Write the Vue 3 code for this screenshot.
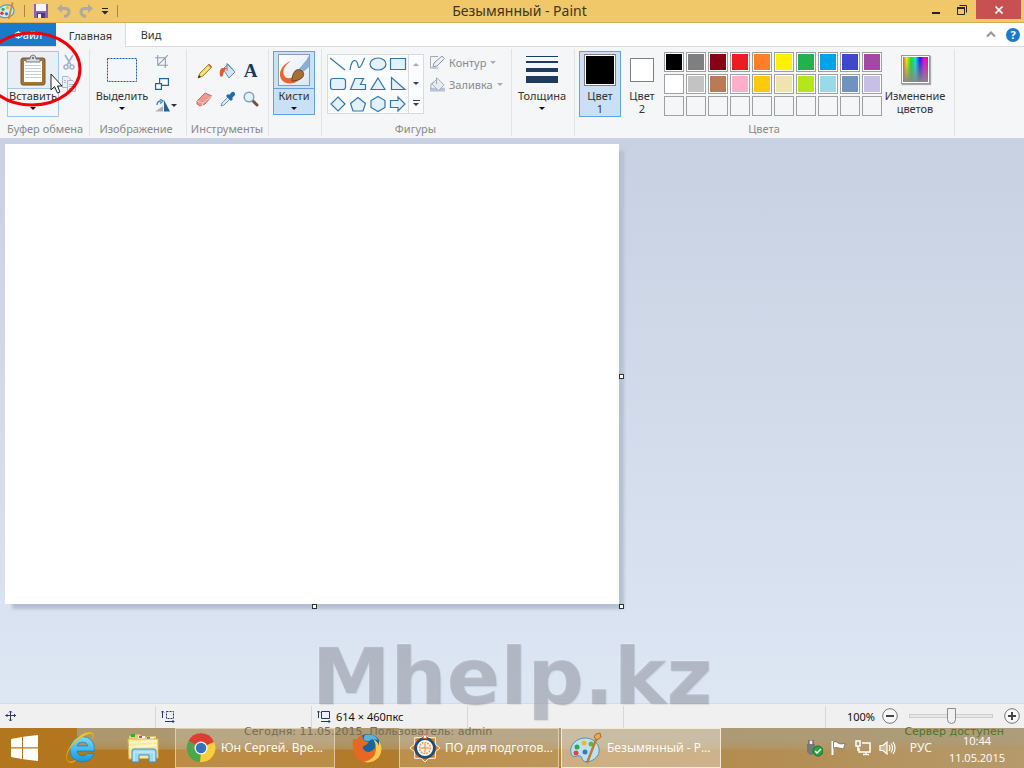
<script setup>
import { ref } from 'vue'

const zoom = ref(50)
const row1 = ['#000000', '#7f7f7f', '#880015', '#ed1c24', '#ff7f27', '#fff200', '#22b14c', '#00a2e8', '#3f48cc', '#a349a4']
const row2 = ['#ffffff', '#c3c3c3', '#b97a57', '#ffaec9', '#ffc90e', '#efe4b0', '#b5e61d', '#99d9ea', '#7092be', '#c8bfe7']
const palette = [...row1, ...row2, ...Array(10).fill('')]
const shapes = [
  { name: 'Линия', d: 'M2 4L17 16' },
  { name: 'Кривая', d: 'M2 16C3 9 5 5 8 7S9 15 12 13S15 5 17 4' },
  { name: 'Овал', d: 'M2 10a8 6 0 1 0 16 0a8 6 0 1 0-16 0z' },
  { name: 'Прямоугольник', d: 'M2.500 4.500H17.500V15.500H2.500z' },
  { name: 'Скругленный прямоугольник', d: 'M5 4.500H15Q17.500 4.500 17.500 7V13Q17.500 15.500 15 15.500H5Q2.500 15.500 2.500 13V7Q2.500 4.500 5 4.500z' },
  { name: 'Многоугольник', d: 'M7 4.500H15.500L12.500 10.500H17.500V15.500H2.500z' },
  { name: 'Треугольник', d: 'M10 4L17 15.500H3z' },
  { name: 'Прямоугольный треугольник', d: 'M3.500 3.500V15.500H17z' },
  { name: 'Ромб', d: 'M10 3L17 10L10 17L3 10z' },
  { name: 'Пятиугольник', d: 'M10 3.500L17.500 9.500L15 17H5L2.500 9.500z' },
  { name: 'Шестиугольник', d: 'M10 2.500L17 6.500V13.500L10 17.500L3 13.500V6.500z' },
  { name: 'Стрелка', d: 'M2.500 6.500H10V3L17 10L10 17V13.500H2.500z' },
]
</script>

<template>
  <div class="window">
    <header class="titlebar">
      <div class="quick">
        <svg class="app-icon" width="18" height="18" viewBox="0 0 32 32"><path d="M15 5C7 5-1 12 1 21c2 8 14 9 22 4 5-3 7-10 4-15C25 6 20 5 15 5z" fill="#cfe9f8" stroke="#5794bd" stroke-width="2" /><circle cx="9" cy="13" r="3" fill="#3fa94b" /><circle cx="17" cy="10" r="3" fill="#f2b51c" /><circle cx="7" cy="20" r="3" fill="#dd3a2c" /><circle cx="15" cy="21" r="3" fill="#3b76c6" /><path d="M26 1L19 30" stroke="#d98532" stroke-width="3.500" /></svg>
        <i class="bar"></i>
        <button class="plain" aria-label="Сохранить"><svg width="16" height="16" viewBox="0 0 16 16"><path d="M1 1H15V15H1z" fill="#8663b5" /><path d="M3 1H13V8H3z" fill="#f8f4fb" /><path d="M4 10H12V15H4z" fill="#4d3a78" /><path d="M5 11H8V15H5z" fill="#f5f1fa" /></svg></button>
        <button class="plain" aria-label="Отменить"><svg width="14" height="14" viewBox="0 0 14 14"><path d="M3.500 4.500H8Q12 4.500 12 8T7 12.500" fill="none" stroke="#b0a99c" stroke-width="3" /><path d="M0 4.500L5 0V9z" fill="#b0a99c" /></svg></button>
        <button class="plain" aria-label="Вернуть"><svg width="14" height="14" viewBox="0 0 14 14"><path d="M10.500 4.500H6Q2 4.500 2 8T7 12.500" fill="none" stroke="#b0a99c" stroke-width="3" /><path d="M14 4.500L9 0V9z" fill="#b0a99c" /></svg></button>
        <button class="plain" aria-label="Настройка панели"><svg width="8" height="8" viewBox="0 0 8 8"><path d="M1 1.500H7" stroke="#2c2615" /><path d="M.5 4H7.500L4 7.500z" fill="#2c2615" /></svg></button>
        <i class="bar"></i>
      </div>
      <h1>Безымянный - Paint</h1>
      <div class="controls">
        <button class="plain" aria-label="Свернуть"><svg width="8" height="14" viewBox="0 0 8 14"><path d="M0 10H8" stroke="#222" stroke-width="2" /></svg></button>
        <button class="plain" aria-label="Восстановить"><svg width="10" height="10" viewBox="0 0 10 10" fill="none" stroke="#2c2615"><path d="M.5 3H7.500V9.500H.5z" /><path d="M0 3H8" stroke-width="2" /><path d="M2.500 .5H9.500V7.500" /></svg></button>
        <button class="plain close" aria-label="Закрыть"><svg width="8" height="8" viewBox="0 0 8 8"><path d="M.5 .5L7.500 7.500M7.500 .5L.5 7.500" stroke="#fff" stroke-width="1.600" /></svg></button>
      </div>
    </header>

    <nav class="tabs">
      <button class="file">Файл</button>
      <button class="tab active">Главная</button>
      <button class="tab">Вид</button>
      <div class="help">
        <button class="plain" aria-label="Свернуть ленту"><svg width="10" height="10" viewBox="0 0 10 10"><path d="M1 6.500L5 2.500L9 6.500" fill="none" stroke="#9a9a9a" stroke-width="2.200" /></svg></button>
        <button class="plain help-button" aria-label="Справка">?</button>
      </div>
    </nav>

    <section class="ribbon">
      <div class="group clipboard">
        <div class="body">
          <button class="split paste">
            <span class="top"><svg width="26" height="32" viewBox="0 0 26 32"><rect x="1" y="4" width="24" height="27" rx="2" fill="#a47238" stroke="#7d5427" /><path d="M4 7H22V28H4z" fill="#fff" /><path d="M5 11.500H21M5 14.500H21M5 17.500H21M5 20.500H21M5 23.500H21" stroke="#c5cdd6" /><path d="M6 8V5H10Q10 1 13 1T16 5H20V8z" fill="#d8dcdf" stroke="#737a80" /><circle cx="13" cy="4" r="1" fill="#555" /></svg></span>
            <span class="caption">Вставить</span><i class="arrow"></i>
          </button>
          <div class="stack">
            <button class="plain" aria-label="Вырезать"><svg width="12" height="16" viewBox="0 0 12 16" fill="none" stroke="#a3b3c8" stroke-width="1.600"><path d="M2 1L8 11M10 1L4 11" /><circle cx="3" cy="13" r="2" /><circle cx="9" cy="13" r="2" /></svg></button>
            <button class="plain" aria-label="Копировать"><svg width="14" height="16" viewBox="0 0 14 16" fill="#edf1f7" stroke="#a9b9cf"><path d="M.5 .5H6L8.500 3V11.500H.5z" /><path d="M5.500 4.500H11L13.500 7V15.500H5.500z" /><path d="M7 8.500H12M7 10.500H12M7 12.500H12M2 4.500H4M2 6.500H4" /></svg></button>
          </div>
        </div>
        <div class="label">Буфер обмена</div>
      </div>

      <div class="group image">
        <div class="body">
          <button class="split select">
            <span class="top"><svg width="32" height="26" viewBox="0 0 32 26"><rect x="1.500" y="1.500" width="29" height="23" fill="#f3f7fb" stroke="#1c5c9c" stroke-dasharray="2 1" /></svg></span>
            <span class="caption">Выделить</span><i class="arrow"></i>
          </button>
          <div class="stack">
            <button class="plain" aria-label="Обрезать"><svg width="13" height="13" viewBox="0 0 12 12" fill="none" stroke="#8f9db2"><path d="M2.500 0V9.500H12M0 2.500H9.500V12M2.500 9.500L12 0" /></svg></button>
            <button class="plain" aria-label="Изменить размер"><svg width="14" height="12" viewBox="0 0 14 12" fill="#fff" stroke="#1f66a5" stroke-width="1.200"><path d="M4.600 .6H13.400V7.400H4.600z" /><path d="M.6 5.600H6.400V11.400H.6z" /></svg></button>
            <button class="plain rotate" aria-label="Повернуть"><svg width="16" height="13" viewBox="0 0 16 13"><path d="M0 12.500L8 7V12.500z" fill="#a8b1b9" /><path d="M9 12.500V1L15 12.500z" fill="#28638d" /><path d="M2 6Q2 2 6 2M5 0L8 2L5 4.500" fill="none" stroke="#3e86c4" stroke-width="1.300" /></svg><i class="arrow"></i></button>
          </div>
        </div>
        <div class="label">Изображение</div>
      </div>

      <div class="group tools">
        <div class="body tool-grid">
          <button class="plain" aria-label="Карандаш"><svg width="16" height="16" viewBox="0 0 16 16"><path d="M1 15L3 10L12 1L15 4L6 13z" fill="#f4d45b" stroke="#8f7131" stroke-width=".8" /><path d="M11 2L14 5L15 4L12 1z" fill="#d96a5c" /><path d="M4 12L12 4" stroke="#fff3aa" /><path d="M1 15L2 12L4 14z" fill="#342b20" /></svg></button>
          <button class="plain" aria-label="Заливка цветом"><svg width="17" height="16" viewBox="0 0 17 16"><path d="M4 6L9 1L16 9L10 15z" fill="#d3e5f1" stroke="#6f8da5" /><path d="M8 0V8M9 2L15 8" stroke="#6b8ea9" fill="none" /><path d="M1 13Q0 6 3 5L9 5Q5 6 4 12Q3 15 1 13z" fill="#e6592c" /></svg></button>
          <button class="plain text-tool" aria-label="Текст">A</button>
          <button class="plain" aria-label="Ластик"><svg width="17" height="15" viewBox="0 0 17 15"><path d="M1 9L9 1L16 4L9 12L4 14L1 12z" fill="#ef9791" stroke="#b25b59" stroke-width=".8" /><path d="M1 9L7 11L16 4M7 11L6 14" fill="none" stroke="#ffcbc7" /></svg></button>
          <button class="plain" aria-label="Палитра"><svg width="16" height="16" viewBox="0 0 16 16"><path d="M1 15L2 12L8 6L10 8L4 14z" fill="#d7eef9" stroke="#55809e" stroke-width=".8" /><path d="M6 5L8 3L9 4L12 1Q15 0 15 4L12 7L13 8L11 10z" fill="#2369ab" /></svg></button>
          <button class="plain" aria-label="Масштаб"><svg width="16" height="16" viewBox="0 0 16 16"><path d="M9 9L14 14" stroke="#745037" stroke-width="3" stroke-linecap="round" /><circle cx="6" cy="6" r="4.800" fill="#dff3ff" stroke="#8aa0b1" stroke-width="1.500" /></svg></button>
        </div>
        <div class="label">Инструменты</div>
      </div>

      <div class="group brushes">
        <div class="body">
          <button class="split brush">
            <span class="top"><svg width="32" height="32" viewBox="0 0 32 32"><defs><linearGradient id="paper" x2="1" y2="1"><stop stop-color="#fff" /><stop offset="1" stop-color="#d9e7f1" /></linearGradient></defs><rect x=".5" y=".5" width="31" height="31" fill="url(#paper)" stroke="#8c9eae" /><path d="M13 7C-1 12-2 29 12 29.500C18 29.500 21 26 23 23L18 20C14 25 8 26 6 21C4 16 7 11 13 7z" fill="#ea642e" /><path d="M31 2L20 15L24 19L31 13z" fill="#8bafd0" /><path d="M29 4L19 16L22 18" fill="none" stroke="#eff8ff" stroke-width="1.500" /><path d="M14 27C14 18 19 13 24 17C29 22 22 27 14 27z" fill="#a66e35" stroke="#74451e" /></svg></span>
            <span class="caption">Кисти</span><i class="arrow"></i>
          </button>
        </div>
      </div>

      <div class="group shapes">
        <div class="body">
          <div class="gallery">
            <div class="shape-grid">
              <button v-for="s in shapes" :key="s.name" class="plain" :aria-label="s.name"><svg width="20" height="20" viewBox="0 0 20 20"><path :d="s.d" :fill="s.name === 'Линия' || s.name === 'Кривая' ? 'none' : '#e3f1fb'" stroke="#3476ac" stroke-width="1.200" /></svg></button>
            </div>
            <div class="scroller">
              <button class="plain" aria-label="Вверх"><i class="arrow up"></i></button>
              <button class="plain" aria-label="Вниз"><i class="arrow"></i></button>
              <button class="plain" aria-label="Все фигуры"><i class="line"></i><i class="arrow"></i></button>
            </div>
          </div>
          <div class="options">
            <button class="plain"><svg width="15" height="14" viewBox="0 0 15 14"><path d="M8 1.500H.5V13L8 13" fill="none" stroke="#9eabbb" /><path d="M3 12L4 8L12 1L14.500 3.500L7 11z" fill="#edf0f4" stroke="#8999ac" /></svg>Контур<i class="arrow"></i></button>
            <button class="plain"><svg width="15" height="15" viewBox="0 0 16 15"><path d="M0 11H16V15H0z" fill="#b6c2d9" /><path d="M2 7L8 1L15 8L9 14z" fill="#e8edf3" stroke="#9dabba" /><path d="M7 0V7M1 12V7L4 5" stroke="#94a4b8" fill="none" /></svg>Заливка<i class="arrow"></i></button>
          </div>
        </div>
        <div class="label">Фигуры</div>
      </div>

      <div class="group size">
        <div class="body">
          <button class="split">
            <span class="top"><svg width="32" height="28" viewBox="0 0 32 28"><path d="M0 0H32V1H0zM0 5H32V7H0zM0 12H32V16H0zM0 20H32V27H0z" fill="#1f3a5f" /></svg></span>
            <span class="caption">Толщина</span><i class="arrow"></i>
          </button>
        </div>
      </div>

      <div class="group colors">
        <div class="body">
          <button class="color-choice chosen"><span class="swatch black"></span><span>Цвет<br>1</span></button>
          <button class="color-choice"><span class="swatch white"></span><span>Цвет<br>2</span></button>
          <div class="palette">
            <button v-for="(c, i) in palette" :key="i" :class="{ empty: !c }" :style="{ backgroundColor: c || 'transparent' }" :aria-label="'Цвет палитры ' + (i + 1)"></button>
          </div>
          <button class="color-choice edit"><span class="swatch rainbow"></span><span>Изменение<br>цветов</span></button>
        </div>
        <div class="label">Цвета</div>
      </div>
    </section>

    <main class="workspace">
      <div class="canvas">
        <i class="handle right"></i><i class="handle bottom"></i><i class="handle corner"></i>
      </div>
      <div class="watermark">Mhelp.kz</div>
    </main>

    <footer class="status">
      <div class="cell"><svg width="12" height="12" viewBox="0 0 12 12" fill="none" stroke="#223d5c"><path d="M5.500 1V11M.5 5.500H11M4 2.500L5.500 1L7 2.500M4 9.500L5.500 11L7 9.500M2.500 4L1 5.500L2.500 7M9 4L10.500 5.500L9 7" /></svg></div>
      <div class="cell"><svg width="14" height="13" viewBox="0 0 14 13" fill="none" stroke="#223d5c"><path d="M1.500 1V8M0 2.500L1.500 1L3 2.500M4 11.500H13M11.500 10L13 11.500L11.500 13" /><path d="M5.500 1.500H12.500V8.500H5.500z" stroke-dasharray="2 1" /></svg></div>
      <div class="cell"><svg width="14" height="13" viewBox="0 0 14 13" fill="none" stroke="#223d5c"><path d="M1.500 1V8M0 2.500L1.500 1L3 2.500M4 11.500H13M11.500 10L13 11.500L11.500 13M4.500 1.500H12.500V8.500H4.500z" /></svg><span>614 × 460пкс</span></div>
      <div class="cell"></div>
      <div class="cell last"></div>
      <div class="zoom">
        <span>100%</span>
        <button class="plain" aria-label="Уменьшить"><svg width="16" height="16" viewBox="0 0 16 16"><circle cx="8" cy="8" r="7.300" fill="#f7f7f7" stroke="#777" /><path d="M4 8H12" stroke="#444" stroke-width="2" /></svg></button>
        <input v-model="zoom" type="range" min="0" max="100" aria-label="Масштаб">
        <button class="plain" aria-label="Увеличить"><svg width="16" height="16" viewBox="0 0 16 16"><circle cx="8" cy="8" r="7.300" fill="#f7f7f7" stroke="#777" /><path d="M4 8H12M8 4V12" stroke="#444" stroke-width="2" /></svg></button>
      </div>
    </footer>

    <div class="taskbar">
      <span class="ghost left">Сегодня: 11.05.2015&nbsp; Пользователь: admin</span>
      <span class="ghost server">Сервер доступен</span>
      <button class="plain start" aria-label="Пуск"><svg width="28" height="26" viewBox="0 0 28 26" fill="#fff"><path d="M0 4L11 2V12.300H0zM12 1.800L27 0V12.300H12zM0 13.500H11V24L0 22zM12 13.500H27V26L12 24.200z" /></svg></button>
      <button class="plain pin" aria-label="Internet Explorer"><svg width="32" height="32" viewBox="0 0 32 32"><defs><linearGradient id="ie" y2="1" x2="0"><stop stop-color="#7bdcff" /><stop offset="1" stop-color="#1599d8" /></linearGradient></defs><path d="M29.500 19H12Q13 24 17.500 24Q21 24 22 21.500H29Q26 30 17 30Q5 29 5 17.500Q6 5 17 4.500Q30 5 29.500 19zM12 14H23Q22 10 17.500 10Q13 10 12 14z" fill="url(#ie)" stroke="#137eb7" stroke-width=".7" fill-rule="evenodd" /><path d="M27 8C30 1 26 0 19 4C9 9-1 22 2 28Q4 32 11 28Q8 32 4 30C-4 26 8 6 20 1C30-2 30 4 27 8z" fill="#f8c828" stroke="#d9a015" stroke-width=".5" /></svg></button>
      <button class="plain pin" aria-label="Проводник"><svg width="32" height="30" viewBox="0 0 32 30"><path d="M2 3L12 1L16 4L29 3V8H2z" fill="#f2ce69" /><path d="M4 1H8V4H4z" fill="#2fac49" /><path d="M11 3H18V6H11z" fill="#fff" /><path d="M12 3H15V5H12z" fill="#db5140" /><path d="M20 4H27V7H20z" fill="#fff" /><path d="M20 4H23V6H20z" fill="#3189ce" /><path d="M1 6H31V25L2 26z" fill="#fae9a2" stroke="#d8b75b" /><path d="M2 10L30 8M2 14L30 12" stroke="#fff6cb" stroke-width="2" /><path d="M5 29V18Q5 16 7 16H27Q29 16 29 18V29H22V22H12V29z" fill="#9ed8f2" stroke="#438fbd" /><path d="M7 28V19H27V28" fill="none" stroke="#d4f1fd" /></svg></button>
      <button class="task"><svg width="30" height="30" viewBox="0 0 30 30"><path d="M15 15L2.500 8A14 14 0 0 1 28 9z" fill="#dc3e32" /><path d="M15 15L28 9A14 14 0 0 1 14 29z" fill="#f8cf3b" /><path d="M15 15L14 29A14 14 0 0 1 2.500 8z" fill="#49a84b" /><circle cx="15" cy="15" r="6.500" fill="#fff" /><circle cx="15" cy="15" r="5.200" fill="#3572bc" /></svg><span>Юн Сергей. Вре...</span></button>
      <button class="plain pin" aria-label="Firefox"><svg width="32" height="32" viewBox="0 0 32 32"><circle cx="17" cy="15" r="13" fill="#17659e" /><path d="M14 3Q23 1 27 8Q20 6 18 9Q10 9 14 3z" fill="#55b5dd" /><path d="M2 7L7 7Q8 3 12 2Q10 6 14 9L18 10L15 13Q10 14 13 18Q17 22 22 18Q26 15 24 8Q31 15 27 24Q20 33 10 29Q0 25 2 7z" fill="#e86724" /><path d="M28 8Q33 17 28 25Q22 32 13 30Q25 27 25 17Q25 11 22 7Q27 10 28 14z" fill="#ffc94b" /></svg></button>
      <button class="task station"><svg width="30" height="32" viewBox="0 0 32 32"><path d="M16 1L20 5H27V12L32 16L27 20V27H20L16 31L12 27H5V20L0 16L5 12V5H12z" fill="#e47a20" stroke="#fff" /><circle cx="16" cy="16" r="10" fill="#fff" stroke="#174d7d" stroke-width="3" /><circle cx="16" cy="16" r="6" fill="#fff3df" stroke="#e99b59" stroke-width="1.500" stroke-dasharray="2 1" /><path d="M11 16H21M16 11V21" stroke="#e6a66b" stroke-width="1.500" /><path d="M14 4L16 1L18 4V6H14z" fill="#fff" stroke="#d44c1b" /></svg><span>ПО для подготов...</span></button>
      <button class="task current"><svg width="32" height="32" viewBox="0 0 32 32"><path d="M15 6C7 6-1 13 1 21q1 5 6 3q5-1 5 3c2 5 12 3 16-4 4-8-3-17-13-17z" fill="#bee1f1" stroke="#558fb8" /><circle cx="7" cy="15" r="2.500" fill="#31a84d" /><circle cx="14" cy="11" r="2.500" fill="#efb72b" /><circle cx="21" cy="12" r="2.500" fill="#62b545" /><circle cx="6" cy="21" r="2.500" fill="#dc4936" /><circle cx="15" cy="20" r="2.500" fill="#3779bc" /><path d="M27 5L17 31" stroke="#c07c34" stroke-width="2.500" /><path d="M24 5Q25 1 30 1L31 5L27 8z" fill="#e6aa56" stroke="#ad6b2c" /></svg><span>Безымянный - P...</span></button>
      <div class="tray">
        <svg width="16" height="17" viewBox="0 0 16 17"><path d="M2 4V0H6V4" fill="#eee" stroke="#555" /><path d="M0 4H8V12L5 15H3L0 12z" fill="#777" /><circle cx="11" cy="11" r="5" fill="#23a641" stroke="#17752e" /><path d="M8 11L10 13L14 9" fill="none" stroke="#fff" stroke-width="1.500" /></svg>
        <svg width="16" height="16" viewBox="0 0 16 16"><path d="M1.500 1V15" stroke="#fff" stroke-width="2" /><path d="M2.500 2Q5 1 7 3L9 4L14 3.500L12.500 9L8 8Q5 7 2.500 8z" fill="#fff" stroke="#5a4e3d" stroke-width=".6" /></svg>
        <svg width="16" height="16" viewBox="0 0 16 16" fill="none" stroke="#fff" stroke-width="1.500"><path d="M7 3H15V12H4V8M8 14.500H14M11 12V14" /><path d="M1 1H5V6H1zM3 6V11" /></svg>
        <svg width="17" height="16" viewBox="0 0 17 16" fill="none" stroke="#fff" stroke-width="1.200"><path d="M1 5.500H4L8 2V14L4 10.500H1z" fill="#fff" fill-opacity=".35" /><path d="M10 5Q12 8 10 11M12 3.500Q15 8 12 12.500M14 2Q18 8 14 14" /></svg>
        <span class="lang">РУС</span>
        <time>10:44<br>11.05.2015</time>
      </div>
    </div>

    <svg class="mark" width="84" height="80" viewBox="0 0 84 80"><ellipse cx="32" cy="40" rx="48" ry="36" fill="none" stroke="#f00008" stroke-width="3" /></svg>
    <svg class="cursor" width="13" height="21" viewBox="0 0 13 21"><path d="M1 1V17L4.500 13.500L7.500 20L10 19L7.500 13H12z" fill="#fff" stroke="#222" /></svg>
  </div>
</template>

<style>
html, body, #app { height: 100%; }
body { margin: 0; overflow: hidden; }
</style>

<style scoped>
* { box-sizing: border-box; }
.window { position: relative; display: flex; flex-direction: column; height: 100vh; overflow: hidden; font: 11px/13px "Noto Sans", "Open Sans", sans-serif; color: #333; }
button { font: inherit; color: inherit; margin: 0; padding: 0; border: 0; background: none; }
svg { display: block; flex: none; }
.plain { display: flex; align-items: center; justify-content: center; }

.titlebar { display: grid; grid-template-columns: 1fr auto 1fr; height: 23px; background: #f0c869; border-bottom: 1px solid #d6ae55; }
.quick { display: flex; align-items: center; gap: 8px; }
.app-icon { margin-left: -2px; }
.bar { width: 1px; height: 12px; background: #a68748; }
h1 { margin: 0 0 0 15px; font: 14px/22px "Noto Sans", "Open Sans", sans-serif; color: #41351c; }
.controls { display: flex; justify-content: flex-end; align-items: flex-start; gap: 8px; padding-right: 3px; }
.controls button { width: 18px; height: 19px; }
.controls .close { width: 45px; margin-left: -3px; background: #c75050; }

.tabs { display: flex; height: 24px; background: #fff; border-bottom: 1px solid #dadbdc; }
.file { width: 56px; background: #1979ca; color: #fff; }
.tab { width: 50px; }
.tab.active { width: 70px; height: 24px; background: #f5f6f7; border-right: 1px solid #dadbdc; }
.help { display: flex; align-items: center; gap: 10px; margin-left: auto; padding-right: 4px; }
.help-button { width: 14px; height: 14px; border-radius: 50%; background: #1979ca; color: #fff; font-weight: bold; }

.ribbon { display: flex; height: 93px; background: #f5f6f7; border-bottom: 2px solid #cbd4e3; padding: 2px 0; }
.group { display: flex; flex-direction: column; flex: none; border-right: 1px solid #e2e3e4; padding: 2px 5px 0 6px; }
.body { display: flex; flex: 1; align-items: flex-start; }
.label { color: #8a8a8a; text-align: center; line-height: 13px; white-space: nowrap; margin-bottom: 1px; }
.clipboard { width: 90px; padding-left: 7px; padding-right: 6px; }
.image { width: 97px; padding-right: 10px; }
.image .label { align-self: center; }
.tools { width: 82px; padding-left: 4px; padding-right: 5px; }
.tools .label { align-self: center; }
.brushes { width: 53px; padding-left: 4px; }
.shapes { width: 190px; padding-left: 5px; padding-right: 7px; }
.size { width: 63px; padding-left: 4px; }
.colors { width: 380px; padding-left: 4px; }

.split { display: flex; flex-direction: column; align-items: center; width: 52px; height: 66px; border: 1px solid transparent; }
.top { display: flex; align-items: center; justify-content: center; width: 100%; height: 37px; border-bottom: 1px solid transparent; }
.caption { line-height: 13px; white-space: nowrap; }
.arrow { width: 0; height: 0; border: 3px solid transparent; border-top-color: currentColor; border-bottom: 0; }
.split .arrow { margin-top: 5px; color: #111; }
.paste { border-color: #a4c8ea; }
.paste .top { background: #e8eff7; border-color: #a4c8ea; }
.brush { width: 42px; height: 64px; background: #c9e0f7; border-color: #62a2e4; }
.brush .top { border-color: #62a2e4; }
.stack { display: flex; flex-direction: column; align-items: center; gap: 1px; margin-left: 3px; }
.stack button { height: 21px; }
.image .stack { margin-left: 7px; align-items: flex-start; }
.rotate { gap: 0; }
.tool-grid { display: grid; grid-template-columns: repeat(3, 23px); grid-auto-rows: 28px; padding: 6px 0 0 2px; align-content: start; align-items: center; }
.text-tool { font: bold 19px/20px "Liberation Serif", serif; color: #1f3a5f; }

.gallery { display: flex; margin-top: 3px; height: 60px; border: 1px solid #dadbdc; background: #fbfcfd; }
.shape-grid { display: grid; grid-template-columns: repeat(4, 20px); grid-auto-rows: 20px; align-content: center; }
.scroller { display: grid; grid-template-rows: repeat(3, 1fr); width: 15px; border-left: 1px solid #dadbdc; color: #37404a; }
.scroller button { flex-direction: column; gap: 2px; }
.up { border-top: 0; border-bottom: 3px solid #aaa; }
.line { width: 7px; height: 1px; background: #37404a; }
.options { display: flex; flex-direction: column; margin: 0 0 0 6px; color: #8a8a8a; }
.options button { height: 22px; gap: 4px; justify-content: flex-start; white-space: nowrap; }
.options .arrow { color: #aaa; }

.color-choice { display: flex; flex-direction: column; align-items: center; width: 42px; height: 66px; border: 1px solid transparent; padding-top: 2px; }
.color-choice span:last-child { margin-top: 3px; }
.chosen { background: #c9e0f7; border-color: #62a2e4; }
.swatch { width: 32px; height: 32px; border: 1px solid #808080; background: #000; box-shadow: inset 0 0 0 1px #fff; }
.white { width: 24px; height: 24px; margin: 4px; background: #fff; }
.rainbow { width: 29px; height: 29px; margin: 1px 0 2px; border-color: #999; box-shadow: inset 0 0 0 1px #fff, 1px 1px 1px #aaa; background: linear-gradient(to bottom, transparent, #888), linear-gradient(to right, #e33, #fe0, #0e1, #0ee, #11e, #e0e, #e11); }
.edit { width: 62px; margin-left: 2px; }
.palette { display: grid; grid-template-columns: repeat(10, 20px); grid-auto-rows: 20px; gap: 2px; margin: 1px 0 0 1px; }
.palette button { border: 1px solid #a0a0a0; box-shadow: inset 0 0 0 1px #fff; }
.palette .empty { box-shadow: none; }

.workspace { position: relative; flex: 1; min-height: 0; padding: 4px 5px; background: linear-gradient(#c8d1e1, #dde6f3); }
.canvas { position: relative; width: 614px; height: 460px; background: #fff; box-shadow: 6px 6px 3px -1px #b3c1d3; }
.handle { position: absolute; width: 5px; height: 5px; border: 1px solid #333; background: #fff; }
.right { left: 100%; top: 50%; }
.bottom { left: 50%; top: 100%; }
.corner { left: 100%; top: 100%; }
.watermark { position: absolute; z-index: 2; left: 0; right: 0; bottom: -20px; text-align: center; font: bold 79px/92px "DejaVu Sans", sans-serif; color: rgba(130, 137, 150, .4); text-shadow: 1px 1px 1px rgba(100, 110, 130, .15), -1px -1px 1px rgba(255, 255, 255, .2); pointer-events: none; }

.status { display: flex; height: 25px; background: #f0f0f0; border-top: 1px solid #d5dbe2; color: #111; }
.cell { display: flex; align-items: center; gap: 5px; width: 156px; padding: 0 0 2px 5px; margin-top: 2px; border-right: 1px solid #d7d7d7; }
.cell.last { flex: 1; }
.zoom { display: flex; align-items: center; gap: 7px; padding: 0 4px 0 21px; }
input { appearance: none; width: 92px; height: 20px; margin: 0; padding: 0 4px; background: transparent; }
input::-webkit-slider-runnable-track { height: 4px; background: #e7e7e7; border: 1px solid #cecece; }
input::-webkit-slider-thumb { appearance: none; width: 9px; height: 16px; margin-top: -7px; background: #f0f0f0; border: 1px solid #8c8c8c; border-radius: 0 0 5px 5px; }

.taskbar { position: relative; display: flex; align-items: stretch; gap: 2px; height: 40px; color: #fff; background: linear-gradient(90deg, #b2761f 77px, transparent 77px), linear-gradient(rgba(172, 157, 124, .85) 12px, rgba(179, 151, 102, .7) 21px, transparent 22px), linear-gradient(90deg, #b2761f, #b17b2b 38%, #b28a4c 68%, #b69a6c); }
.start { width: 49px; }
.pin { width: 60px; }
.task { display: flex; align-items: center; gap: 5px; width: 160px; padding-left: 10px; border: 1px solid rgba(235, 222, 195, .7); background: rgba(255, 255, 255, .15); font: 12px/16px "Open Sans", "Noto Sans", sans-serif; white-space: nowrap; }
.current { padding-left: 8px; background: rgba(255, 255, 255, .35); border-color: #f2e9d9; }
.ghost { position: absolute; top: -3px; font: 11px/14px "DejaVu Sans", sans-serif; color: #756d55; white-space: nowrap; }
.ghost.left { left: 244px; }
.server { right: 20px; color: #4b7622; }
.tray { position: relative; display: flex; align-items: center; gap: 8px; margin-left: auto; padding-right: 19px; white-space: nowrap; }
.lang { font: 12px/16px "Open Sans", "Noto Sans", sans-serif; margin-left: 6px; }
time { font: 11px/17px "Open Sans", "Noto Sans", sans-serif; text-align: center; margin: 2px 0 0 9px; }
.mark { position: absolute; left: 0; top: 29px; pointer-events: none; }
.cursor { position: absolute; left: 50px; top: 73px; pointer-events: none; }
</style>
